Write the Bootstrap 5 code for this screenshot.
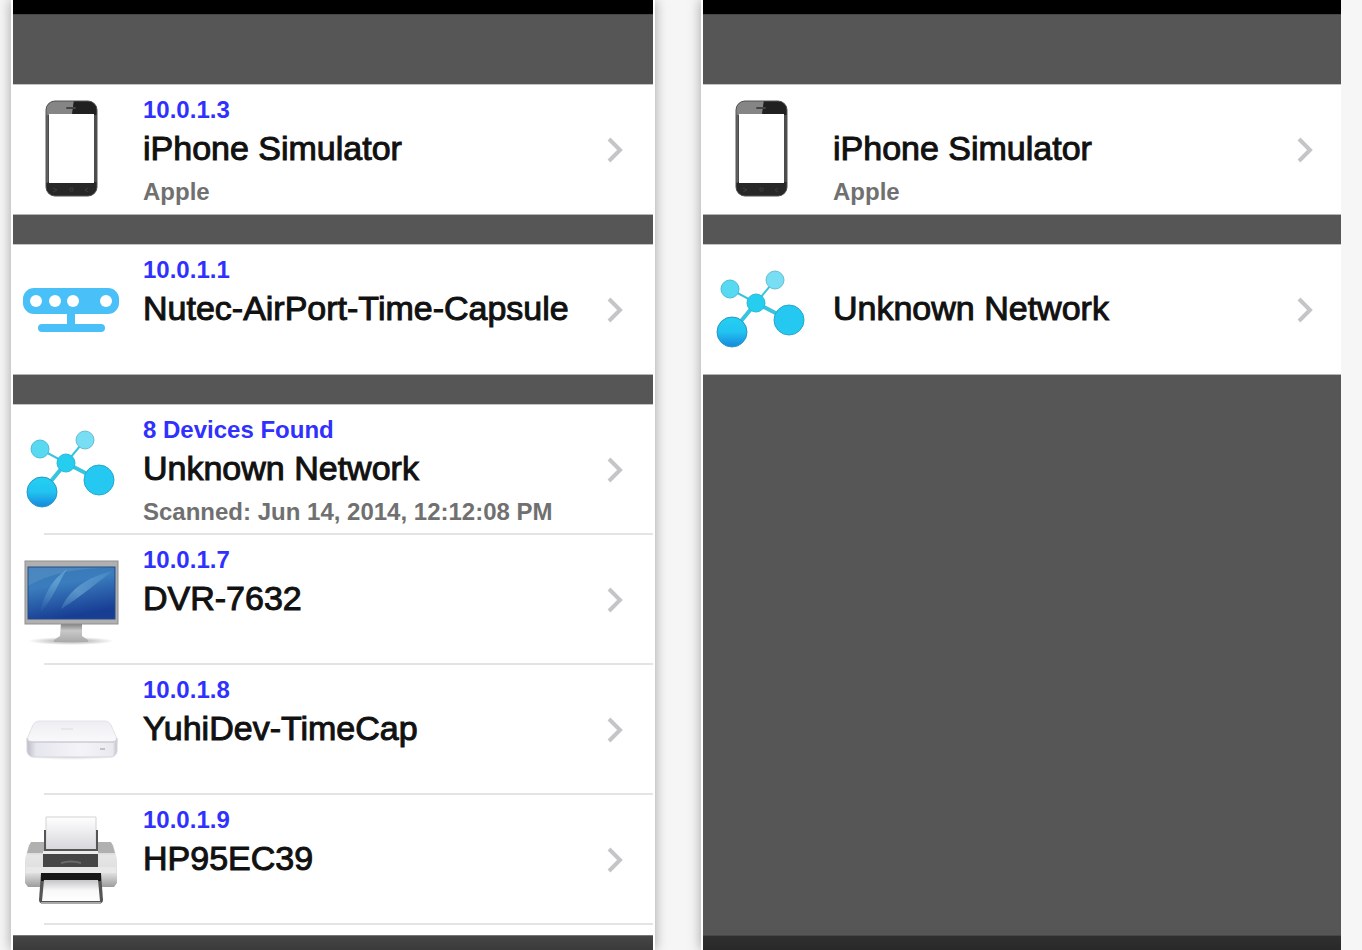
<!DOCTYPE html>
<html lang="en">
<head>
<meta charset="utf-8">
<meta name="viewport" content="width=device-width, initial-scale=1">
<title>Network devices</title>
<link href="https://cdn.jsdelivr.net/npm/bootstrap@5.3.0/dist/css/bootstrap.min.css" rel="stylesheet">
<style>
  body { background: #f6f6f6; font-family: "Liberation Sans", Arial, sans-serif; }
  .shots { grid-template-columns: 644fr 640fr; column-gap: 46px; margin-right: 21px; padding-left: 11px; min-height: 100vh; }
  .shot { background: #fff; padding: 0 2px; box-shadow: 0 0 12px rgba(0, 0, 0, .35); min-width: 0; }
  .shot-cut { padding-right: 0; }
  .screen { background: #565656; }
  .status-strip { height: 14px; background: #000; }
  .title-strip { height: 70px; border-top: 1px solid #484848; }
  .device-group { background: #fff; border-top: 1px solid #c4c4c4; border-bottom: 1px solid #b4b4b4; margin-bottom: 29px; }
  .device-group.open-end { border-bottom: 0; margin-bottom: 0; padding-bottom: 10px; }
  .device { height: 129px; padding-right: 30px; color: #111; }
  .open-end .device { height: 130px; }
  .shot-cut .device { padding-right: 28px; }
  .device-icon { width: 96px; height: 130px; margin: 0 24px 0 10px; }
  .device-text { padding-top: 11px; white-space: nowrap; }
  .device-note { font-size: 24px; font-weight: 700; line-height: 28px; height: 28px; color: #3030ff; }
  .device-name { font-size: 34px; line-height: 48px; -webkit-text-stroke: 1px currentColor; }
  .device-sub { font-size: 24px; font-weight: 700; line-height: 28px; margin-top: 6px; color: #707070; }
  .chevron { width: 16px; height: 28px; }
  .divider { border: 0; height: 2px; margin: -2px 0 0 31px; background: #e4e4e4; opacity: 1; }
  .tool-strip { height: 15px; background: linear-gradient(#454545, #3a3a3a); border-top: 1px solid #777; }
  .tool-strip.dim { background: linear-gradient(#303030, #292929); border-top-color: #484848; }
</style>
</head>
<body>
<svg width="0" height="0" class="position-absolute" aria-hidden="true">
  <defs>
    <linearGradient id="node" x1="0" y1="0" x2="0" y2="1"><stop offset="0" stop-color="#24d0f2"/><stop offset=".5" stop-color="#22c3f0"/><stop offset="1" stop-color="#1687dc"/></linearGradient>
    <linearGradient id="blue" x1="0" y1="0" x2=".3" y2="1"><stop offset="0" stop-color="#3a78b4"/><stop offset=".4" stop-color="#3a7cbd"/><stop offset="1" stop-color="#183e94"/></linearGradient>
    <linearGradient id="ray" x1="1" y1="0" x2="0" y2="1"><stop offset="0" stop-color="#8cc8ea" stop-opacity=".1"/><stop offset=".5" stop-color="#8cc8ea" stop-opacity=".45"/><stop offset="1" stop-color="#8cc8ea" stop-opacity="0"/></linearGradient>
    <linearGradient id="stand" x1="0" y1="0" x2="0" y2="1"><stop offset="0" stop-color="#777"/><stop offset=".4" stop-color="#c8c8c8"/><stop offset="1" stop-color="#aaa"/></linearGradient>
    <linearGradient id="side" x1="0" y1="0" x2="0" y2="1"><stop offset="0" stop-color="#aaa"/><stop offset=".3" stop-color="#e6e6e6"/><stop offset=".7" stop-color="#ddd"/><stop offset="1" stop-color="#9c9c9c"/></linearGradient>
    <linearGradient id="paper" x1="0" y1="0" x2="0" y2="1"><stop offset="0" stop-color="#fff"/><stop offset="1" stop-color="#d5d5da"/></linearGradient>
    <linearGradient id="sheet" x1="0" y1="0" x2="0" y2="1"><stop offset="0" stop-color="#c5c5c8"/><stop offset=".5" stop-color="#f8f8f8"/><stop offset="1" stop-color="#fff"/></linearGradient>
    <linearGradient id="front" x1="0" y1="0" x2="1" y2="0"><stop offset="0" stop-color="#bcbcc6"/><stop offset=".1" stop-color="#e6e6ee"/><stop offset=".6" stop-color="#f4f4f8"/><stop offset=".95" stop-color="#e9e9ef"/><stop offset="1" stop-color="#c2c2ca"/></linearGradient>
    <linearGradient id="lid" x1="0" y1="0" x2="0" y2="1"><stop offset="0" stop-color="#eeeef2"/><stop offset="1" stop-color="#fafafd"/></linearGradient>
    <radialGradient id="shade"><stop offset="0" stop-color="#777" stop-opacity=".7"/><stop offset="1" stop-color="#777" stop-opacity="0"/></radialGradient>
    <clipPath id="phone-body"><rect x="23" y="16" width="51" height="95" rx="9"/></clipPath>
  </defs>
  <symbol id="phone" viewBox="0 0 96 130">
    <rect x="23" y="16" width="51" height="95" rx="9" fill="#4c4c4c"/>
    <g clip-path="url(#phone-body)">
      <path d="M22 15H51L49 30H22Z" fill="#858585"/><path d="M51 15H75V30H49Z" fill="#202020"/>
      <rect x="22" y="97" width="54" height="15" fill="#272727"/>
      <path d="M24 27V98" stroke="#777" stroke-width="1"/>
    </g>
    <rect x="26" y="29" width="45" height="69" fill="#fff"/>
    <path d="M44 23h8" stroke="#444" stroke-width="2" stroke-linecap="round"/>
    <path d="M30 103l4 2-4 2M47 103h3v3h-3zM65 103l-3 2 3 2" fill="none" stroke="#3d3d3d"/>
    <rect x="23" y="16" width="51" height="95" rx="9" fill="none" stroke="#555"/>
  </symbol>
  <symbol id="router" viewBox="0 0 96 130">
    <rect x="0" y="43" width="96" height="26" rx="11" fill="#49c0f8"/>
    <path d="M48 67V83M19 83H78" stroke="#49c0f8" stroke-width="8" stroke-linecap="round"/>
    <g fill="#fff"><circle cx="13" cy="56" r="6"/><circle cx="32" cy="56" r="6"/><circle cx="50" cy="56" r="6"/><circle cx="83" cy="56" r="6"/></g>
  </symbol>
  <symbol id="network" viewBox="0 0 96 130">
    <g stroke="#37c4de"><path d="M17 44L43 58L62 35" stroke-width="2" fill="none"/><path d="M19 87L43 58L76 75" stroke-width="4" fill="none"/></g>
    <circle cx="17" cy="44" r="9" fill="#58d9f2" stroke="#49bdd6"/>
    <circle cx="62" cy="35" r="9" fill="#78def4" stroke="#68bdd0"/>
    <circle cx="43" cy="58" r="9" fill="#25cdee" stroke="#2bb8d8"/>
    <circle cx="19" cy="87" r="15" fill="url(#node)" stroke="#2797c5"/>
    <circle cx="76" cy="75" r="15" fill="#24c8f1" stroke="#24a8d0"/>
  </symbol>
  <symbol id="monitor" viewBox="0 0 96 130">
    <ellipse cx="48" cy="106" rx="43" ry="4" fill="url(#shade)"/>
    <path d="M38 88H59V101L65 105V107H31V105L37 101Z" fill="url(#stand)"/>
    <rect x="2" y="26" width="93" height="63" fill="#b0b0b0" stroke="#8f8f8f"/>
    <rect x="5" y="32" width="87" height="52" fill="url(#blue)"/>
    <path d="M17 78C20 62 28 45 44 34C33 52 30 64 17 78ZM38 74C45 56 63 42 90 36C74 47 58 62 38 74Z" fill="url(#ray)"/>
    <path d="M5 51C35 34 65 34 92 32H5Z" fill="#9cc9e6" opacity=".18"/>
    <rect x="5" y="32" width="87" height="52" fill="none" stroke="#244b85"/>
  </symbol>
  <symbol id="capsule" viewBox="0 0 96 130">
    <ellipse cx="49" cy="92" rx="44" ry="3" fill="url(#shade)" opacity=".4"/>
    <path d="M16 56H82Q86 56 88 60L94 74V78H4V74L10 60Q12 56 16 56Z" fill="url(#lid)" stroke="#e2e2e8"/>
    <path d="M4 73Q5 77 10 77H89Q93 77 94 73V86Q93 92 87 92H11Q5 92 4 86Z" fill="url(#front)" stroke="#d5d5dc"/>
    <path d="M7 77H91" stroke="#c6c6ce" stroke-width="1"/>
    <path d="M38 64h12" stroke="#e6e6ec" stroke-width="2"/><path d="M77 84h5" stroke="#c0c0c6" stroke-width="2"/>
  </symbol>
  <symbol id="printer" viewBox="0 0 96 130">
    <path d="M6 50L9 47H87L90 50L94 64V88L91 92H5L2 88V64Z" fill="url(#side)"/>
    <path d="M4 58L8 47H88L92 58Z" fill="#b0b0b0"/>
    <path d="M23 22H73V56H23Z" fill="url(#paper)" stroke="#d2d2d2"/>
    <path d="M22 35V55H74V35" fill="none" stroke="#555" stroke-width="2"/>
    <path d="M20 56H75V59H20Z" fill="#ececec"/>
    <path d="M20 59H75V72H20Z" fill="#464646"/><path d="M38 68Q48 65 58 68" stroke="#6a6a6a" stroke-width="2" fill="none"/>
    <path d="M3 72H93V78H3Z" fill="#e8e8e8"/>
    <path d="M18 78H78L80 105Q80 108 76 109H20Q16 108 16 105Z" fill="#555"/>
    <path d="M18 78H78V86H18Z" fill="#161616"/>
    <path d="M21 85H75L77 106H19Z" fill="url(#sheet)"/><path d="M18 108H78" stroke="#aaa" stroke-width="2"/>
  </symbol>
  <symbol id="chevron" viewBox="0 0 16 28"><path d="M2 3L13 14L2 25" fill="none" stroke="#c5c5c8" stroke-width="4"/></symbol>
</svg>

<main class="shots d-grid overflow-hidden">
  <section class="shot">
    <div class="screen d-flex flex-column h-100">
      <div class="status-strip"></div>
      <div class="title-strip"></div>
      <div class="device-group">
        <a href="#" class="device d-flex text-decoration-none">
          <svg class="device-icon flex-shrink-0"><use href="#phone"/></svg>
          <div class="device-text flex-grow-1"><div class="device-note">10.0.1.3</div><div class="device-name">iPhone Simulator</div><div class="device-sub">Apple</div></div>
          <svg class="chevron flex-shrink-0 align-self-center"><use href="#chevron"/></svg>
        </a>
      </div>
      <div class="device-group">
        <a href="#" class="device d-flex text-decoration-none">
          <svg class="device-icon flex-shrink-0"><use href="#router"/></svg>
          <div class="device-text flex-grow-1"><div class="device-note">10.0.1.1</div><div class="device-name">Nutec-AirPort-Time-Capsule</div></div>
          <svg class="chevron flex-shrink-0 align-self-center"><use href="#chevron"/></svg>
        </a>
      </div>
      <div class="device-group open-end flex-grow-1">
        <a href="#" class="device d-flex text-decoration-none">
          <svg class="device-icon flex-shrink-0"><use href="#network"/></svg>
          <div class="device-text flex-grow-1"><div class="device-note">8 Devices Found</div><div class="device-name">Unknown Network</div><div class="device-sub">Scanned: Jun 14, 2014, 12:12:08 PM</div></div>
          <svg class="chevron flex-shrink-0 align-self-center"><use href="#chevron"/></svg>
        </a>
        <hr class="divider">
        <a href="#" class="device d-flex text-decoration-none">
          <svg class="device-icon flex-shrink-0"><use href="#monitor"/></svg>
          <div class="device-text flex-grow-1"><div class="device-note">10.0.1.7</div><div class="device-name">DVR-7632</div></div>
          <svg class="chevron flex-shrink-0 align-self-center"><use href="#chevron"/></svg>
        </a>
        <hr class="divider">
        <a href="#" class="device d-flex text-decoration-none">
          <svg class="device-icon flex-shrink-0"><use href="#capsule"/></svg>
          <div class="device-text flex-grow-1"><div class="device-note">10.0.1.8</div><div class="device-name">YuhiDev-TimeCap</div></div>
          <svg class="chevron flex-shrink-0 align-self-center"><use href="#chevron"/></svg>
        </a>
        <hr class="divider">
        <a href="#" class="device d-flex text-decoration-none">
          <svg class="device-icon flex-shrink-0"><use href="#printer"/></svg>
          <div class="device-text flex-grow-1"><div class="device-note">10.0.1.9</div><div class="device-name">HP95EC39</div></div>
          <svg class="chevron flex-shrink-0 align-self-center"><use href="#chevron"/></svg>
        </a>
        <hr class="divider">
      </div>
      <div class="tool-strip"></div>
    </div>
  </section>

  <section class="shot shot-cut">
    <div class="screen d-flex flex-column h-100">
      <div class="status-strip"></div>
      <div class="title-strip"></div>
      <div class="device-group">
        <a href="#" class="device d-flex text-decoration-none">
          <svg class="device-icon flex-shrink-0"><use href="#phone"/></svg>
          <div class="device-text flex-grow-1"><div class="device-note"></div><div class="device-name">iPhone Simulator</div><div class="device-sub">Apple</div></div>
          <svg class="chevron flex-shrink-0 align-self-center"><use href="#chevron"/></svg>
        </a>
      </div>
      <div class="device-group">
        <a href="#" class="device d-flex text-decoration-none">
          <svg class="device-icon flex-shrink-0"><use href="#network"/></svg>
          <div class="device-text flex-grow-1"><div class="device-note"></div><div class="device-name">Unknown Network</div></div>
          <svg class="chevron flex-shrink-0 align-self-center"><use href="#chevron"/></svg>
        </a>
      </div>
      <div class="tool-strip dim mt-auto"></div>
    </div>
  </section>
</main>
<script src="https://cdn.jsdelivr.net/npm/bootstrap@5.3.0/dist/js/bootstrap.bundle.min.js"></script>
</body>
</html>
